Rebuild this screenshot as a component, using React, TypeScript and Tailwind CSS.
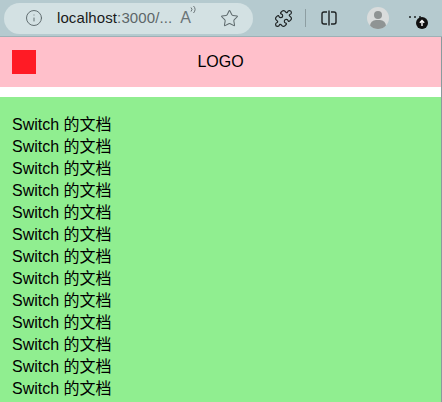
import React from 'react';
import { Info, Star, Puzzle } from 'lucide-react';

function BrowserBar() {
  return (
    <div className="h-[37px] shrink-0 bg-[#b5cacf] border-b border-[#9db1b6] flex items-center pl-[4px] pr-[6px]">
      <div className="w-[249px] h-[31px] rounded-full bg-[#d3e1e3] flex items-center pl-[21px] pr-[14px]">
        <Info size={18} strokeWidth={1.3} className="text-[#5f6b6e]" />
        <span className="ml-[14px] text-[15px] tracking-[0.1px] font-['Liberation_Sans',sans-serif]">
          <span className="text-[#1a1a1a]">localhost</span>
          <span className="text-[#5d6668]">:3000/...</span>
        </span>
        <span className="ml-auto relative text-[16px] text-[#6a7477] font-['Liberation_Sans',sans-serif] font-light">
          A
          <svg className="absolute -right-[7px] -top-[1px]" width="8" height="9" viewBox="0 0 8 9" fill="none" stroke="#6a7477" strokeWidth="1">
            <path d="M1 2.5q2 1.8 0 4" />
            <path d="M3.5 1q3.2 3.3 0 7" />
          </svg>
        </span>
        <Star size={19} strokeWidth={1.3} className="ml-[29px] text-[#5f6b6e]" />
      </div>
      <Puzzle size={19} strokeWidth={1.5} className="ml-[21px] text-[#1e2324]" />
      <div className="ml-[12px] w-px h-[18px] bg-[#8d9ea2]" />
      <svg className="ml-[14px]" width="18" height="16" viewBox="0 0 18 16" fill="none" stroke="#1e2324" strokeWidth="1.4">
        <path d="M7 2H4a2 2 0 0 0-2 2v8a2 2 0 0 0 2 2h3" />
        <path d="M11 2h3a2 2 0 0 1 2 2v8a2 2 0 0 1-2 2h-3" />
        <path d="M9 0.5v15" />
      </svg>
      <div className="ml-[29px] w-[22px] h-[22px] rounded-full bg-[#d9dcdc] overflow-hidden relative">
        <div className="absolute left-[7px] top-[4px] w-[8px] h-[8px] rounded-full bg-[#8f9494]" />
        <div className="absolute left-[3px] top-[13px] w-[16px] h-[12px] rounded-full bg-[#8f9494]" />
      </div>
      <div className="ml-[18px] relative w-[22px] h-[22px]">
        <div className="absolute left-[2px] top-[9px] flex gap-[3px]">
          <span className="w-[2px] h-[2px] rounded-full bg-[#1e2324]" />
          <span className="w-[2px] h-[2px] rounded-full bg-[#1e2324]" />
          <span className="w-[2px] h-[2px] rounded-full bg-[#1e2324]" />
        </div>
        <div className="absolute left-[9px] top-[10px] w-[12px] h-[12px] rounded-full bg-[#111] flex items-center justify-center">
          <svg width="8" height="8" viewBox="0 0 8 8" fill="none" stroke="white" strokeWidth="1.4">
            <path d="M4 7V1.5M1.8 3.7L4 1.5l2.2 2.2" />
          </svg>
        </div>
      </div>
    </div>
  );
}

function App() {
  const lines = Array.from({ length: 13 }, (_, i) => i);

  return (
    <div className="w-[442px] h-[402px] overflow-hidden flex flex-col font-['Liberation_Sans','Noto_Sans_CJK_SC',sans-serif] bg-white">
      <BrowserBar />
      <div className="flex-1 flex flex-col border-r border-[#8a9a9e] overflow-hidden">
        <header className="h-[50px] shrink-0 bg-[pink] flex items-center justify-between px-3">
          <div className="w-6 h-6 bg-[#ff1b25]" />
          <span className="text-[16px] text-black">LOGO</span>
          <div className="w-6 h-6" />
        </header>
        <div className="h-[10px] shrink-0 bg-white" />
        <main className="flex-1 bg-[lightgreen] px-3 pt-[17px]">
          {lines.map((i) => (
            <div key={i} className="text-[16px] leading-[22px] text-black">
              Switch 的文档
            </div>
          ))}
        </main>
      </div>
    </div>
  );
}

export default App;
